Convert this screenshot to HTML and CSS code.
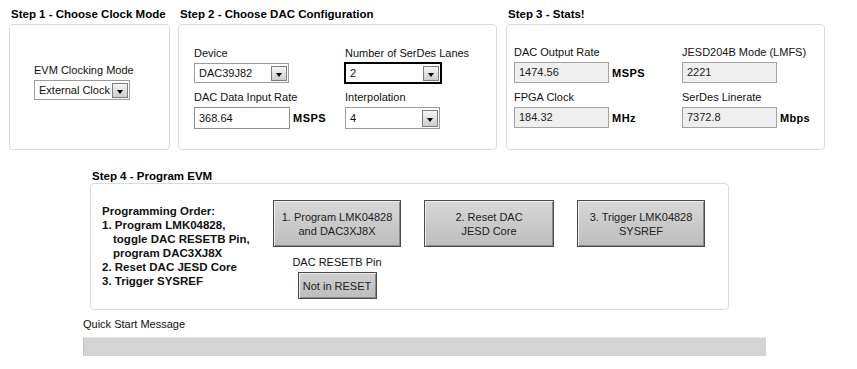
FILE: index.html
```html
<!DOCTYPE html>
<html>
<head>
<meta charset="utf-8">
<link rel="stylesheet" href="styles.css">
</head>
<body>
<div class="top">
  <section class="sec sec1">
    <div class="title">Step 1 - Choose Clock Mode</div>
    <div class="panel p1">
      <div class="grp">
        <div class="lbl">EVM Clocking Mode</div>
        <div class="dd w96"><span class="val">External Clock</span><span class="arr"><i></i></span></div>
      </div>
    </div>
  </section>
  <section class="sec sec2">
    <div class="title">Step 2 - Choose DAC Configuration</div>
    <div class="panel p2">
      <div class="grp">
        <div class="lbl">Device</div>
        <div class="dd w95"><span class="val">DAC39J82</span><span class="arr"><i></i></span></div>
      </div>
      <div class="grp">
        <div class="lbl">Number of SerDes Lanes</div>
        <div class="dd w96 focus"><span class="val">2</span><span class="arr"><i></i></span></div>
      </div>
      <div class="grp">
        <div class="lbl">DAC Data Input Rate</div>
        <div class="row"><div class="inp tall w96">368.64</div><span class="unit">MSPS</span></div>
      </div>
      <div class="grp">
        <div class="lbl">Interpolation</div>
        <div class="dd w95 tall"><span class="val">4</span><span class="arr"><i></i></span></div>
      </div>
    </div>
  </section>
  <section class="sec sec3">
    <div class="title">Step 3 - Stats!</div>
    <div class="panel p3">
      <div class="grp">
        <div class="lbl">DAC Output Rate</div>
        <div class="row"><div class="ro w95">1474.56</div><span class="unit">MSPS</span></div>
      </div>
      <div class="grp">
        <div class="lbl">JESD204B Mode (LMFS)</div>
        <div class="row"><div class="ro w95">2221</div></div>
      </div>
      <div class="grp">
        <div class="lbl">FPGA Clock</div>
        <div class="row"><div class="ro w95">184.32</div><span class="unit">MHz</span></div>
      </div>
      <div class="grp">
        <div class="lbl">SerDes Linerate</div>
        <div class="row"><div class="ro w95">7372.8</div><span class="unit mb">Mbps</span></div>
      </div>
    </div>
  </section>
</div>

<section class="sec sec4">
  <div class="title t4">Step 4 - Program EVM</div>
  <div class="panel p4">
    <div class="order">
      <div class="oline">Programming Order:</div>
      <div class="oitem">1. Program LMK04828,<br>toggle DAC RESETB Pin,<br>program DAC3XJ8X</div>
      <div class="oitem">2. Reset DAC JESD Core</div>
      <div class="oitem">3. Trigger SYSREF</div>
    </div>
    <div class="bcol">
      <div class="btn b128">1. Program LMK04828<br>and DAC3XJ8X</div>
      <div class="pinlbl">DAC RESETB Pin</div>
      <div class="btn small">Not in RESET</div>
    </div>
    <div class="bcol">
      <div class="btn b130">2. Reset DAC<br>JESD Core</div>
    </div>
    <div class="bcol">
      <div class="btn b128">3. Trigger LMK04828<br>SYSREF</div>
    </div>
  </div>
</section>

<section class="quick">
  <div class="qlbl">Quick Start Message</div>
  <div class="qbar"></div>
</section>
</body>
</html>
```

FILE: styles.css
```css
html, body {
  margin: 0;
  padding: 0;
  background: #fff;
}
body {
  font-family: "Liberation Sans", Arial, sans-serif;
  font-size: 11px;
  color: #111;
  width: 857px;
  height: 369px;
  overflow: hidden;
}
.top {
  display: flex;
  padding: 8px 0 0 9px;
}
.sec1 { width: 161px; }
.sec2 { width: 319px; margin-left: 8px; }
.sec3 { width: 319px; margin-left: 9px; }
.title {
  font-weight: bold;
  font-size: 11.5px;
  line-height: 13px;
  padding-left: 2px;
  margin-bottom: 3px;
  white-space: nowrap;
  color: #000;
}
.title.t4 { margin-bottom: 0; }
.panel {
  box-sizing: border-box;
  border: 1px solid #dadada;
  border-radius: 4px;
  background: #fff;
  height: 126px;
}
.grp {
  display: flex;
  flex-direction: column;
  gap: 3px;
}
.lbl {
  line-height: 13px;
  white-space: nowrap;
}
.row {
  display: flex;
  align-items: center;
}
.p1 {
  padding: 39px 0 0 24px;
}
.p2 {
  display: grid;
  grid-template-columns: 151px 150px;
  row-gap: 8px;
  align-content: start;
  padding: 22px 0 0 15px;
}
.p3 {
  display: grid;
  grid-template-columns: 168px 140px;
  row-gap: 8px;
  align-content: start;
  padding: 21px 0 0 7px;
}
.dd, .inp, .ro {
  box-sizing: border-box;
  position: relative;
  height: 20px;
  line-height: 18px;
  padding-left: 4px;
  border: 1px solid #9c9c9c;
  background: #fff;
  white-space: nowrap;
}
.tall { height: 22px; line-height: 20px; }
.w95 { width: 95px; }
.w96 { width: 96px; }
.dd.focus {
  border-color: #000;
  outline: 1px solid #000;
}
.ro {
  background: #efefef;
  border-color: #a3a3a3;
  height: 21px;
  line-height: 19px;
  color: #222;
}
.inp {
  border-color: #8f8f8f;
}
.arr {
  position: absolute;
  right: 1px;
  top: 2px;
  bottom: 1px;
  width: 16px;
  box-sizing: border-box;
  border: 1px solid #7c7c7c;
  background: linear-gradient(#f6f6f6, #cdcdcd);
  display: flex;
  align-items: center;
  justify-content: center;
}
.arr i {
  display: block;
  width: 0;
  height: 0;
  margin-top: 2px;
  border-left: 3.5px solid transparent;
  border-right: 3.5px solid transparent;
  border-top: 4px solid #000;
}
.unit {
  font-weight: bold;
  margin-left: 3px;
  letter-spacing: 0.5px;
  color: #000;
}
.unit.mb { letter-spacing: 0.3px; }

.sec4 {
  margin: 20px 0 0 90px;
  width: 639px;
}
.p4 {
  height: 127px;
  display: flex;
  align-items: flex-start;
  padding: 16px 0 0 11px;
}
.order {
  width: 172px;
  margin-top: 4px;
  font-weight: bold;
  font-size: 11.5px;
  line-height: 14px;
  color: #111;
  white-space: nowrap;
}
.oitem {
  padding-left: 11px;
  text-indent: -11px;
}
.bcol {
  display: flex;
  flex-direction: column;
  align-items: center;
  margin-right: 23px;
}
.btn {
  box-sizing: border-box;
  display: flex;
  align-items: center;
  justify-content: center;
  text-align: center;
  line-height: 14px;
  color: #222;
  border: 1px solid #4a4a4a;
  background: linear-gradient(#d8d8d8, #bdbdbd);
  box-shadow: inset 1px 1px 0 #ececec, inset -1px -1px 0 #8a8a8a;
  white-space: nowrap;
}
.b128 { width: 128px; height: 47px; }
.b130 { width: 130px; height: 47px; }
.pinlbl {
  margin-top: 9px;
  line-height: 13px;
  white-space: nowrap;
}
.btn.small {
  margin-top: 3px;
  width: 79px;
  height: 27px;
  background: linear-gradient(#cfcfcf, #bdbdbd);
}
.quick {
  margin: 8px 0 0 83px;
}
.qlbl {
  line-height: 13px;
  white-space: nowrap;
}
.qbar {
  margin-top: 6px;
  width: 683px;
  height: 19px;
  background: #d4d4d4;
  border-top: 1px solid #e6e6e6;
  border-left: 1px solid #c4c4c4;
  box-sizing: border-box;
}
```
